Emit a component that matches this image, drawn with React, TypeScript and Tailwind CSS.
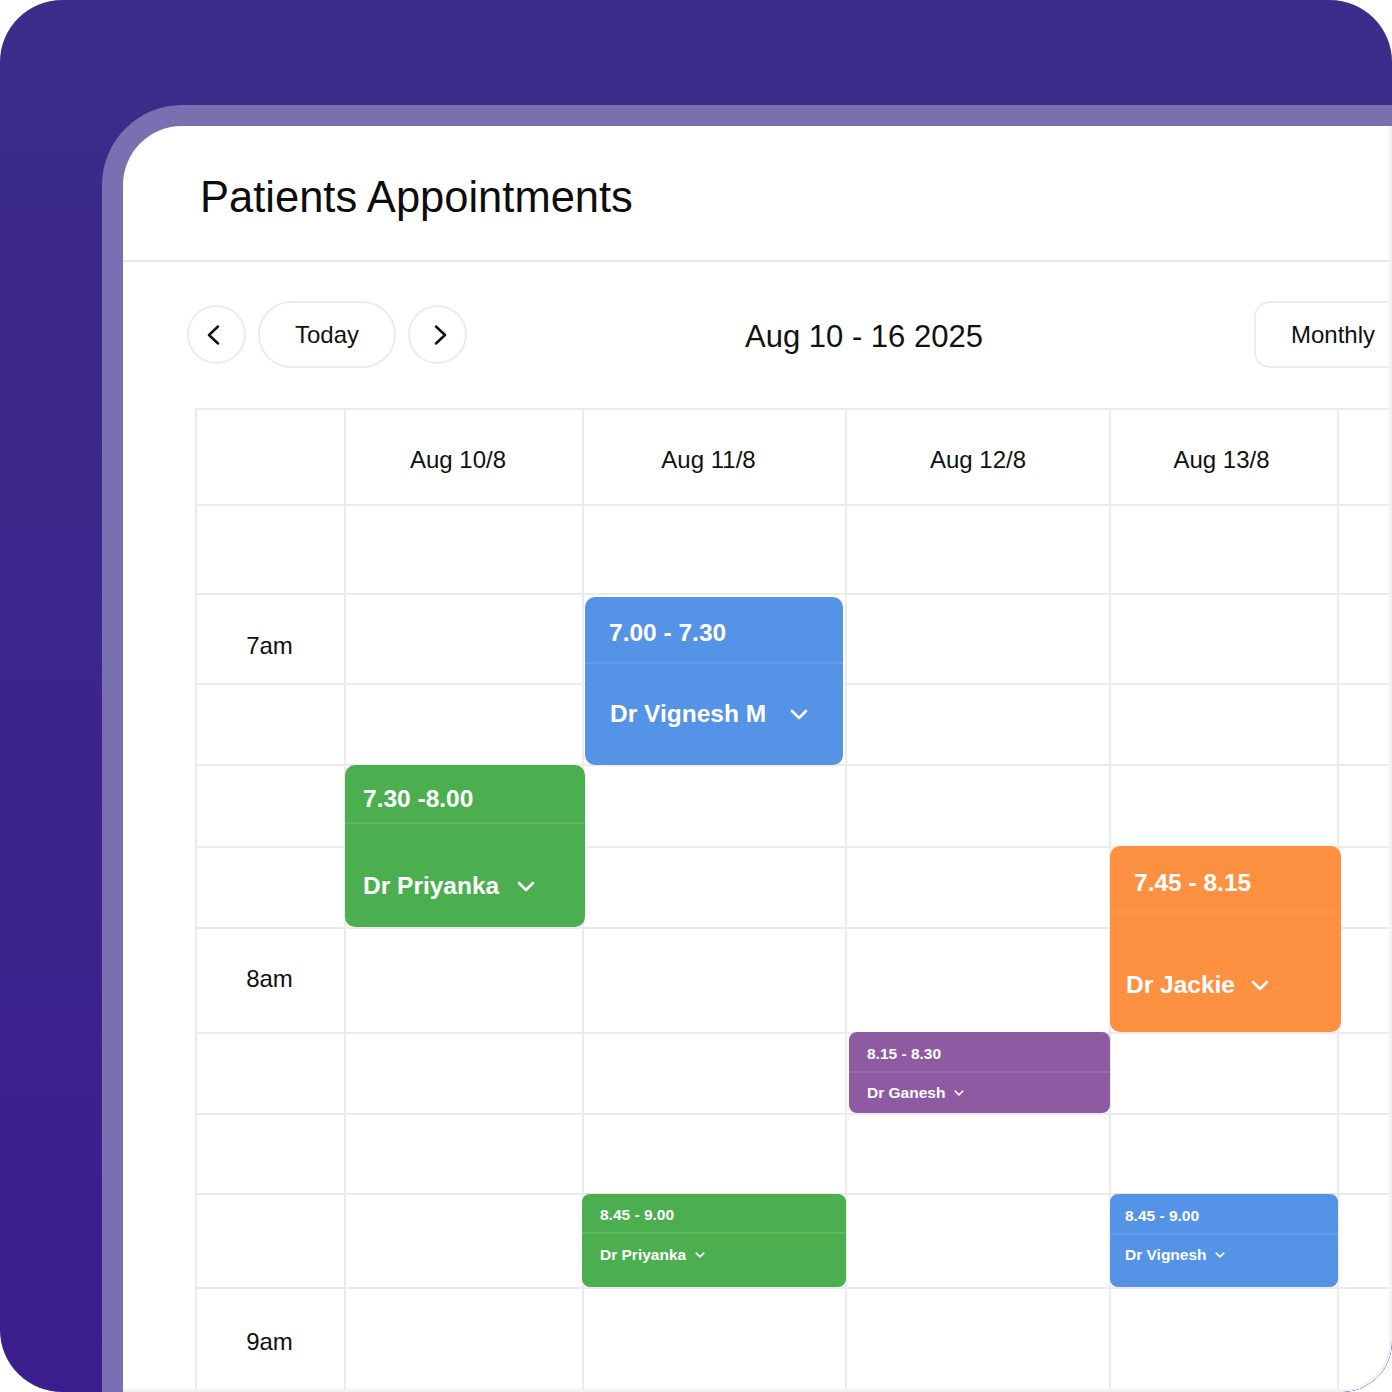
import React from "react";

type Ev = {
  box: string;
  top: string;
  nameCls: string;
  time: string;
  name: string;
  big: boolean;
};

const events: Ev[] = [
  {
    box: "left-[390px] top-[189px] w-[258px] h-[168px] bg-[#5593e6] rounded-[10px]",
    top: "h-[65px] pt-[7px] pl-[24px]",
    nameCls: "pl-[25px] gap-[24px]",
    time: "7.00 - 7.30",
    name: "Dr Vignesh M",
    big: true,
  },
  {
    box: "left-[150px] top-[357px] w-[240px] h-[162px] bg-[#4caf4f] rounded-[10px]",
    top: "h-[57px] pt-[11px] pl-[18px]",
    nameCls: "pl-[18px] pt-[21px] gap-[18px]",
    time: "7.30 -8.00",
    name: "Dr Priyanka",
    big: true,
  },
  {
    box: "left-[915px] top-[438px] w-[231px] h-[186px] bg-[#fe9141] rounded-[10px]",
    top: "h-[65px] pt-[9px] pl-[24px]",
    nameCls: "pl-[16px] pt-[25px] gap-[16px]",
    time: "7.45 - 8.15",
    name: "Dr Jackie",
    big: true,
  },
  {
    box: "left-[654px] top-[624px] w-[261px] h-[81px] bg-[#8e5aa2] rounded-[8px]",
    top: "h-[39px] pt-[5px] pl-[18px]",
    nameCls: "pl-[18px] gap-[9px]",
    time: "8.15 - 8.30",
    name: "Dr Ganesh",
    big: false,
  },
  {
    box: "left-[387px] top-[786px] w-[264px] h-[93px] bg-[#4caf4f] rounded-[8px]",
    top: "h-[38px] pt-[4px] pl-[18px]",
    nameCls: "pl-[18px] pb-[11px] gap-[9px]",
    time: "8.45 - 9.00",
    name: "Dr Priyanka",
    big: false,
  },
  {
    box: "left-[915px] top-[786px] w-[228px] h-[93px] bg-[#5593e6] rounded-[8px]",
    top: "h-[39px] pt-[5px] pl-[15px]",
    nameCls: "pl-[15px] pb-[12px] gap-[8px]",
    time: "8.45 - 9.00",
    name: "Dr Vignesh",
    big: false,
  },
];

function ChevronBig() {
  return (
    <svg width="18" height="11" viewBox="0 0 18 11" fill="none" className="shrink-0">
      <polyline points="2,2 9,9 16,2" stroke="white" strokeWidth="2.6" strokeLinecap="round" strokeLinejoin="round" />
    </svg>
  );
}

function ChevronSmall() {
  return (
    <svg width="10" height="6" viewBox="0 0 10 6" fill="none" className="shrink-0">
      <polyline points="1.2,1.2 5,4.8 8.8,1.2" stroke="white" strokeWidth="1.6" strokeLinecap="round" strokeLinejoin="round" />
    </svg>
  );
}

function EventCard({ e }: { e: Ev }) {
  const size = e.big ? "text-[24.5px]" : "text-[15.5px]";
  return (
    <div className={`absolute flex flex-col overflow-hidden font-bold text-white ${e.box}`}>
      <div className={`flex shrink-0 items-center ${e.top}`}>
        <span className={`leading-none ${size}`}>{e.time}</span>
      </div>
      <div className="h-[2px] shrink-0 bg-white/10" />
      <div className={`flex flex-1 items-center ${e.nameCls}`}>
        <span className={`leading-none ${size}`}>{e.name}</span>
        {e.big ? <ChevronBig /> : <ChevronSmall />}
      </div>
    </div>
  );
}

const headers: { label: string; pad: string }[] = [
  { label: "", pad: "" },
  { label: "Aug 10/8", pad: "pt-[38px] pr-[12px]" },
  { label: "Aug 11/8", pad: "pt-[38px] pr-[12px]" },
  { label: "Aug 12/8", pad: "pt-[38px]" },
  { label: "Aug 13/8", pad: "pt-[38px] pr-[5px]" },
  { label: "", pad: "" },
];
const timeLabels: Record<number, { label: string; pad: string }> = {
  2: { label: "7am", pad: "pt-[39px] pr-[2px]" },
  6: { label: "8am", pad: "pt-[38px] pr-[2px]" },
  10: { label: "9am", pad: "pt-[41px] pr-[2px]" },
};

export default function App() {
  const rows = 11;
  const cols = 6;
  return (
    <div className="h-[1392px] w-[1392px] bg-white font-['Liberation_Sans',Arial,sans-serif] text-[#111]">
      <div className="h-[1392px] w-[1392px] overflow-hidden rounded-[62px] rounded-br-[50px] bg-linear-to-b from-[#3d2c8a] to-[#3a1e8d] pl-[102px] pt-[105px]">
        <div className="h-full w-full overflow-hidden rounded-tl-[80px] rounded-br-[50px] bg-[#7a6fb0] pl-[21px] pt-[21px]">
          <div className="h-full w-full overflow-hidden rounded-tl-[59px] rounded-br-[50px] border-b-[3px] border-r-[3px] border-[#f2f0f9] bg-white">
            {/* Header */}
            <div className="flex h-[136px] items-center border-b-2 border-[#e9e9e9] pl-[77px] pt-[9px]">
              <h1 className="text-[43.5px] font-normal leading-none text-[#0d0d0d]">Patients Appointments</h1>
            </div>

            {/* Toolbar */}
            <div className="mt-[39px] flex h-[67px] w-max items-center pl-[64px]">
              <div className="flex shrink-0 items-center gap-[12px]">
                <button className="flex h-[59px] w-[59px] items-center justify-center rounded-full border-2 border-[#ececec] bg-white">
                  <svg width="13" height="20" viewBox="0 0 13 20" fill="none" className="mr-[7px]">
                    <polyline points="11,1.5 2,10 11,18.5" stroke="#111" strokeWidth="2.5" strokeLinecap="round" strokeLinejoin="round" />
                  </svg>
                </button>
                <button className="flex h-[67px] w-[138px] items-center justify-center rounded-full border-2 border-[#ececec] bg-white text-[24px] leading-none text-[#111]">
                  Today
                </button>
                <button className="flex h-[59px] w-[59px] items-center justify-center rounded-full border-2 border-[#ececec] bg-white">
                  <svg width="13" height="20" viewBox="0 0 13 20" fill="none" className="ml-[6px]">
                    <polyline points="2,1.5 11,10 2,18.5" stroke="#111" strokeWidth="2.5" strokeLinecap="round" strokeLinejoin="round" />
                  </svg>
                </button>
              </div>
              <div className="flex w-[787px] shrink-0 items-center justify-center pl-[7px] pt-[4px]">
                <span className="text-[31px] leading-none text-[#111]">Aug 10 - 16 2025</span>
              </div>
              <button className="flex h-[67px] w-[170px] shrink-0 items-center rounded-[16px] border-2 border-[#ececec] bg-white pl-[35px] text-[24px] leading-none text-[#111]">
                Monthly
              </button>
            </div>

            {/* Grid */}
            <div className="relative ml-[72px] mt-[40px] grid w-max grid-cols-[149px_238px_263px_264px_228px_300px] grid-rows-[96px_89px_90px_81px_82px_81px_105px_81px_80px_94px_130px]">
              {Array.from({ length: rows * cols }).map((_, i) => {
                const r = Math.floor(i / cols);
                const c = i % cols;
                let content: React.ReactNode = null;
                let pad = "";
                if (r === 0) {
                  content = headers[c].label;
                  pad = headers[c].pad;
                } else if (c === 0 && timeLabels[r]) {
                  content = timeLabels[r].label;
                  pad = timeLabels[r].pad;
                }
                return (
                  <div
                    key={i}
                    className={`border-l-2 border-t-2 border-[#ebebeb] text-center text-[24px] leading-[24px] text-[#111] ${pad}`}
                  >
                    {content}
                  </div>
                );
              })}
              {events.map((e, i) => (
                <EventCard key={i} e={e} />
              ))}
            </div>
          </div>
        </div>
      </div>
    </div>
  );
}
